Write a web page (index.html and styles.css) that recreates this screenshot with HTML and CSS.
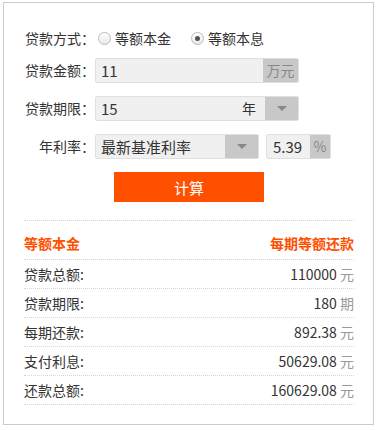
FILE: index.html
```html
<!DOCTYPE html>
<html lang="zh-CN">
<head>
  <meta charset="UTF-8" />
  <meta name="viewport" content="width=device-width, initial-scale=1.0"/>
  <title>房贷计算器</title>
  <link rel="stylesheet" href="styles.css">
</head>
<body>
  <div class="calc">
    <!-- 输入区 -->
    <div class="row row-type">
      <span class="label">贷款方式：</span>
      <label class="radio"><span class="dot"></span>等额本金</label>
      <label class="radio checked"><span class="dot"></span>等额本息</label>
    </div>

    <div class="row">
      <span class="label">贷款金额：</span>
      <div class="field field-amount">
        <span class="value">11</span>
        <span class="addon">万元</span>
      </div>
    </div>

    <div class="row">
      <span class="label">贷款期限：</span>
      <div class="field field-term">
        <span class="value">15</span>
        <span class="unit">年</span>
        <span class="arrow"><i></i></span>
      </div>
    </div>

    <div class="row">
      <span class="label">年利率：</span>
      <div class="field field-rate-type">
        <span class="value">最新基准利率</span>
        <span class="arrow"><i></i></span>
      </div>
      <div class="field field-rate">
        <span class="value">5.39</span>
        <span class="addon addon-small">%</span>
      </div>
    </div>

    <button class="btn">计算</button>

    <!-- 结果区 -->
    <div class="result">
      <div class="result-head">
        <span>等额本金</span>
        <span>每期等额还款</span>
      </div>
      <div class="result-row"><span>贷款总额:</span><span class="num">110000 <em>元</em></span></div>
      <div class="result-row"><span>贷款期限:</span><span class="num">180 <em>期</em></span></div>
      <div class="result-row"><span>每期还款:</span><span class="num">892.38 <em>元</em></span></div>
      <div class="result-row"><span>支付利息:</span><span class="num">50629.08 <em>元</em></span></div>
      <div class="result-row"><span>还款总额:</span><span class="num">160629.08 <em>元</em></span></div>
    </div>
  </div>
</body>
</html>
```

FILE: styles.css
```css
* {
  box-sizing: border-box;
  margin: 0;
  padding: 0;
}
body {
  background: #fff;
  color: #333;
  font-family: "Noto Sans CJK SC", "Noto Sans", sans-serif;
  font-size: 14px;
}
.calc {
  width: 371px;
  height: 423px;
  margin: 2px 0 0 3px;
  border: 1px solid #ccc;
  padding: 23px 19px 0 20px;
}
.row {
  display: flex;
  align-items: center;
  height: 24px;
  margin-bottom: 14px;
}
.row-type {
  margin-bottom: 8px;
}
.label {
  width: 71px;
  text-align: right;
  color: #333;
  white-space: nowrap;
}
.radio {
  display: flex;
  align-items: center;
  margin-left: 3px;
  margin-right: 17px;
}
.dot {
  width: 13px;
  height: 13px;
  border: 1px solid #bbb;
  border-radius: 50%;
  background: linear-gradient(#fff, #e8e8e8);
  margin-right: 4px;
  display: flex;
  align-items: center;
  justify-content: center;
}
.checked .dot::after {
  content: "";
  width: 5px;
  height: 5px;
  border-radius: 50%;
  background: #555;
}
.field {
  display: flex;
  align-items: center;
  height: 25px;
  background: #f0f0f0;
  border: 1px solid #e0e0e0;
  border-radius: 2px;
  overflow: hidden;
}
.field .value {
  flex: 1;
  padding-left: 5px;
  font-size: 15px;
  color: #333;
}
.field-amount,
.field-term {
  width: 204px;
}
.field-rate-type {
  width: 164px;
}
.field-rate {
  width: 65px;
  margin-left: 7px;
}
.field-rate .value {
  padding-left: 6px;
}
.addon {
  height: 100%;
  width: 35px;
  background: #c8c8c8;
  color: #888;
  display: flex;
  align-items: center;
  justify-content: center;
  font-size: 14px;
}
.addon-small {
  width: 20px;
}
.unit {
  margin-right: 9px;
  color: #333;
}
.arrow {
  height: 100%;
  width: 33px;
  background: #c8c8c8;
  display: flex;
  align-items: center;
  justify-content: center;
}
.arrow i {
  width: 0;
  height: 0;
  border-left: 5px solid transparent;
  border-right: 5px solid transparent;
  border-top: 5px solid #888;
}
.btn {
  display: block;
  width: 150px;
  height: 30px;
  margin: 13px auto 0;
  background: #ff5000;
  color: #fff;
  border: none;
  font-family: inherit;
  font-size: 15px;
  cursor: pointer;
}
.result {
  margin-top: 18px;
  border-top: 1px dotted #d6d6d6;
}
.result-head,
.result-row {
  display: flex;
  justify-content: space-between;
  align-items: center;
  border-bottom: 1px dotted #d6d6d6;
}
.result-head {
  height: 39px;
  padding-top: 6px;
  color: #ff5000;
  font-weight: bold;
}
.result-row {
  height: 29px;
}
.num {
  color: #333;
}
.num em {
  font-style: normal;
  color: #999;
}
```
